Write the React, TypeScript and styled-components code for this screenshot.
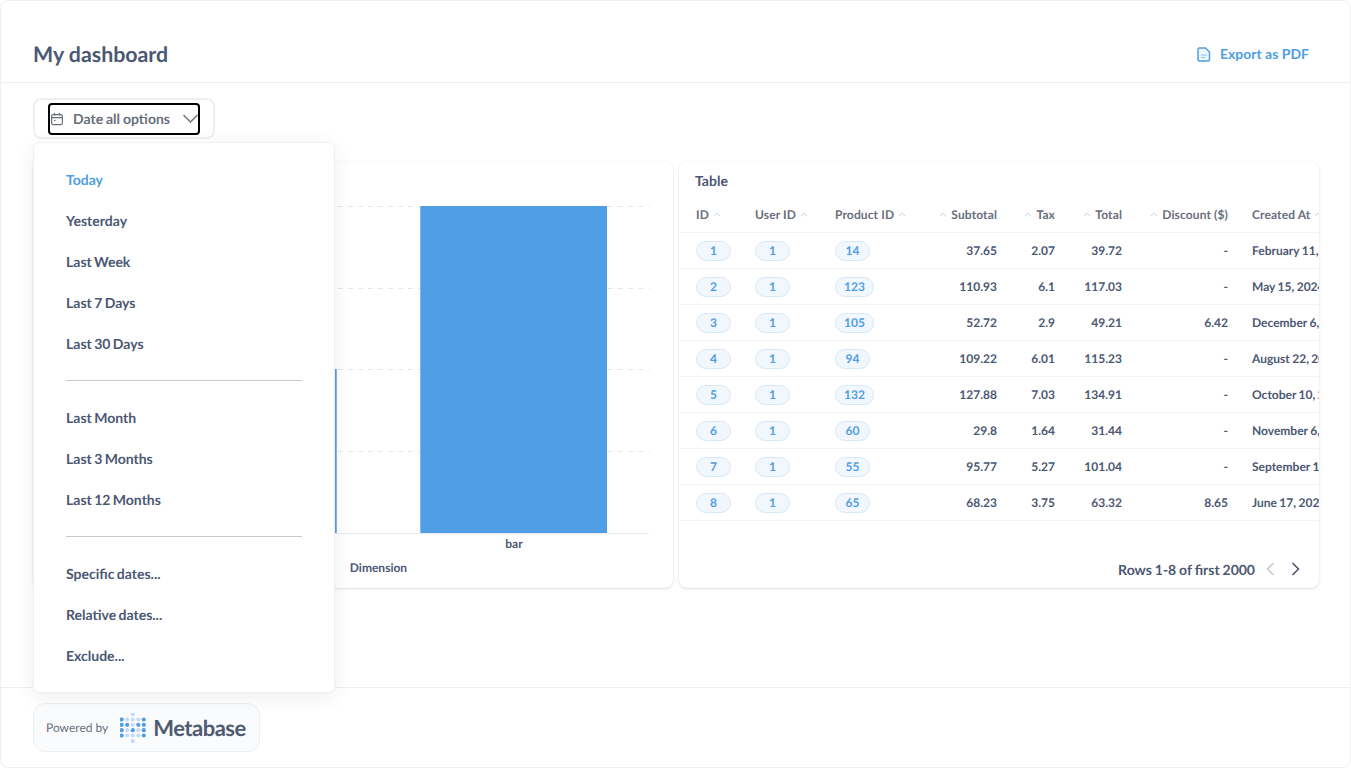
import React from 'react';
import styled, { createGlobalStyle } from 'styled-components';

const Global = createGlobalStyle`
  html, body { margin: 0; padding: 0; background: #fff; }
  body { font-family: Lato, "Open Sans", sans-serif; color: #4c5773; text-rendering: geometricPrecision; }
  * { box-sizing: border-box; }
`;
const Frame = styled.div`
  position: relative; width: 1351px; height: 768px; overflow: hidden; background: #fff;
  border: 1px solid #eeeff0; border-radius: 8px; display: flex; flex-direction: column;
`;
const Header = styled.header`
  height: 82px; padding: 39px 41px 0 32px; border-bottom: 1px solid #eeeff0;
  display: flex; align-items: flex-start; justify-content: space-between; flex: none;
`;
const Title = styled.h1`margin: 0; font-size: 21.33px; line-height: 29px; font-weight: 700; color: #4c5773;`;
const ExportButton = styled.button`
  border: 0; background: none; padding: 0; margin-top: 4px; font: 700 14px/20px Lato, sans-serif; color: #509ee3; display: flex; align-items: center; gap: 9px;
`;
const ParamBar = styled.div`height: 79px; padding: 15px 0 0 32px; flex: none;`;
const Param = styled.div`
  width: 182px; height: 41px; border: 2px solid #eeeff0; border-radius: 8px; padding: 3px 0 0 13px;
`;
const ParamInner = styled.div`
  width: 152px; height: 32px; border: 2px solid #000; border-radius: 4px; padding: 0 0 1px 0; display: flex; align-items: center;
  font-size: 14px; font-weight: 700; color: #696e7b; word-spacing: -0.5px;
`;
const ParamLabel = styled.span`margin-left: 9px; flex: 1;`;
const Cards = styled.div`display: flex; gap: 6px; padding: 0 0 0 32px; flex: none; height: 426px;`;
const Card = styled.section<{ $w: number }>`
  width: ${p => p.$w}px; height: 426px; border-radius: 8px; background: #fff; overflow: hidden; flex: none; position: relative;
  box-shadow: 0 1px 3px rgba(0,0,0,.13), 0 0 1px rgba(0,0,0,.06);
`;
const CardTitle = styled.div`font-size: 14px; font-weight: 700; line-height: 18px; padding: 10px 0 0 16px; height: 35px;`;
const Row = styled.div<{ $head?: boolean }>`
  display: grid; grid-template-columns: 59px 80px 88px 74px 58px 67px 106px 200px; padding-left: 17px; align-items: center;
  height: 36px; border-bottom: 1px solid #f2f3f4; font-size: 12px; font-weight: 700;
  color: ${p => (p.$head ? '#696e7b' : '#4c5773')}; white-space: nowrap;
  ${p => (p.$head ? 'letter-spacing: 0.12px;' : 'word-spacing: -0.5px;')}
`;
const HeadCell = styled.div<{ $end?: boolean; $gap?: boolean }>`
  display: flex; align-items: center; gap: 4px; justify-content: ${p => (p.$end ? 'flex-end' : 'flex-start')};
  padding-left: ${p => (p.$gap ? 24 : 0)}px;
`;
const Cell = styled.div<{ $end?: boolean; $gap?: boolean }>`
  text-align: ${p => (p.$end ? 'right' : 'left')}; padding-left: ${p => (p.$gap ? 24 : 0)}px;
`;
const Badge = styled.span`
  display: inline-block; min-width: 35px; height: 20px; line-height: 18px; padding: 0 8px; border-radius: 10px; text-align: center;
  background: #f1f7fd; border: 1px solid #d9e8f8; color: #509ee3; vertical-align: middle;
`;
const Pager = styled.div`
  position: absolute; right: 17px; bottom: 9px; display: flex; align-items: center; font-size: 14px; font-weight: 700; color: #4c5773; height: 20px; word-spacing: -0.5px;
`;
const PagerIcons = styled.div`display: flex; margin-left: 9px; gap: 10px; align-items: center;`;
const Spacer = styled.div`flex: 1;`;
const Footer = styled.footer`
  height: 80px; flex: none; border-top: 1px solid #eeeff0; padding: 15px 0 0 32px;
`;
const Powered = styled.div`
  width: 227px; height: 49px; border: 1px solid #eeeff0; border-radius: 12px; background: #f9fbfc; padding-left: 12px;
  display: flex; align-items: center; font-size: 12px; color: #696e7b;
`;
const Wordmark = styled.span`font-size: 22px; font-weight: 700; color: #505a71; margin-left: 7px; letter-spacing: -0.5px;`;
const LogoBox = styled.span`margin-left: 12px; display: flex;`;
const Popover = styled.div`
  position: absolute; left: 32px; top: 141px; width: 302px; height: 551px; background: #fff; border: 1px solid #eeeff0; border-radius: 6px;
  box-shadow: 0 4px 20px rgba(0,0,0,.07); padding: 16px 32px 0; z-index: 5; word-spacing: -1px;
`;
const MenuItem = styled.div<{ $active?: boolean }>`
  height: 41px; line-height: 41px; font-size: 14px; font-weight: 700; color: ${p => (p.$active ? '#509ee3' : '#4c5773')};
`;
const Divider = styled.div`height: 1px; background: #c7cbd3; margin: 16px 0;`;

const Chevron = () => (
  <svg width="8" height="5" viewBox="0 0 8 5" fill="none" stroke="#d0d3d9" strokeWidth="1"><path d="M.8 4.2 4 1l3.2 3.2" /></svg>
);
const xs = [1.7, 7.2, 12.8, 18.3, 23.8];
const ys = [1.2, 6.5, 11.8, 17.2, 22.5, 28];
const pattern = ['..L..', 'DLLLD', 'DDLDD', 'DLDLD', 'DLLLD', '..L..'];
const dots: [number, number, string][] = [];
pattern.forEach((r, y) => r.split('').forEach((c, x) => {
  if (c === '.') return;
  dots.push([xs[x], ys[y], c === 'D' ? '#509ee3' : '#c5dcf4']);
}));

const data = [
  ['1','1','14','37.65','2.07','39.72','-','February 11, 2025, 9:40 PM'],
  ['2','1','123','110.93','6.1','117.03','-','May 15, 2024, 8:04 AM'],
  ['3','1','105','52.72','2.9','49.21','6.42','December 6, 2024, 10:21 PM'],
  ['4','1','94','109.22','6.01','115.23','-','August 22, 2024, 4:30 AM'],
  ['5','1','132','127.88','7.03','134.91','-','October 10, 2024, 11:34 PM'],
  ['6','1','60','29.8','1.64','31.44','-','November 6, 2024, 6:04 PM'],
  ['7','1','55','95.77','5.27','101.04','-','September 11, 2025, 5:48 PM'],
  ['8','1','65','68.23','3.75','63.32','8.65','June 17, 2025, 3:11 AM'],
];
const grid = [206, 288, 369, 451];

export default function App() {
  return (
    <Frame>
      <Global />
      <Header>
        <Title>My dashboard</Title>
        <ExportButton>
          <svg width="14" height="15" viewBox="0 0 14 15" fill="none">
            <path d="M2.5 1h6L12.5 5v7.500a1.500 1.500 0 0 1-1.500 1.500H2.500A1.500 1.500 0 0 1 1 12.500v-10A1.500 1.500 0 0 1 2.500 1Z" fill="#eef5fc" stroke="#509ee3" strokeWidth="1.5" />
            <path d="M4 8h6M4 10.500h4" stroke="#8fc0ec" strokeWidth="1.2" />
          </svg>
          Export as PDF
        </ExportButton>
      </Header>
      <ParamBar>
        <Param>
          <ParamInner>
            <svg width="14" height="14" viewBox="0 0 14 14" fill="none" stroke="#696e7b" strokeWidth="1.2">
              <rect x="1.6" y="2.6" width="10.8" height="10" rx="1.5" />
              <path d="M1.6 5.600h10.800M4.500 1v2.500M9.500 1v2.500" />
              <path d="M4 8.500h1.500" />
            </svg>
            <ParamLabel>Date all options</ParamLabel>
            <svg width="15" height="9" viewBox="0 0 15 9" fill="none" stroke="#696e7b" strokeWidth="1.3"><path d="M.5 1 7.500 8l7-7" /></svg>
          </ParamInner>
        </Param>
      </ParamBar>
      <Cards>
        <Card $w={640}>
          <svg width="640" height="426" viewBox="33 162 640 426" fontFamily="Lato, sans-serif" fontWeight="700" fontSize="12" fill="#4c5773">
            {grid.map(y => <line key={y} x1="298" x2="649" y1={y + 0.5} y2={y + 0.5} stroke="#e5e7ea" strokeDasharray="5 5" />)}
            <rect x="100" y="369" width="236.7" height="164" fill="#509ee3" />
            <rect x="420.3" y="206" width="186.7" height="327" fill="#509ee3" />
            <line x1="33" x2="649" y1="533.5" y2="533.5" stroke="#e9eaec" />
            <text x="514" y="548" textAnchor="middle">bar</text>
            <text x="378.5" y="572" textAnchor="middle">Dimension</text>
          </svg>
        </Card>
        <Card $w={640}>
          <CardTitle>Table</CardTitle>
          <Row $head>
            <HeadCell>ID <Chevron /></HeadCell>
            <HeadCell>User ID <Chevron /></HeadCell>
            <HeadCell>Product ID <Chevron /></HeadCell>
            <HeadCell $end><Chevron /> Subtotal</HeadCell>
            <HeadCell $end><Chevron /> Tax</HeadCell>
            <HeadCell $end><Chevron /> Total</HeadCell>
            <HeadCell $end><Chevron /> Discount ($)</HeadCell>
            <HeadCell $gap>Created At <Chevron /></HeadCell>
          </Row>
          {data.map(r => (
            <Row key={r[0]}>
              <Cell><Badge>{r[0]}</Badge></Cell>
              <Cell><Badge>{r[1]}</Badge></Cell>
              <Cell><Badge>{r[2]}</Badge></Cell>
              <Cell $end>{r[3]}</Cell>
              <Cell $end>{r[4]}</Cell>
              <Cell $end>{r[5]}</Cell>
              <Cell $end>{r[6]}</Cell>
              <Cell $gap>{r[7]}</Cell>
            </Row>
          ))}
          <Pager>
            Rows 1-8 of first 2000
            <PagerIcons>
              <svg width="14" height="14" viewBox="0 0 14 14" fill="none" stroke="#c7cbd3" strokeWidth="1.6"><path d="M9.500 1 3.500 7l6 6" /></svg>
              <svg width="14" height="14" viewBox="0 0 14 14" fill="none" stroke="#4c5773" strokeWidth="1.6"><path d="M4.500 1l6 6-6 6" /></svg>
            </PagerIcons>
          </Pager>
        </Card>
      </Cards>
      <Spacer />
      <Footer>
        <Powered>
          Powered by
          <LogoBox>
            <svg width="26" height="30" viewBox="0 0 26 30">
              {dots.map(([x, y, c], i) => <circle key={i} cx={x} cy={y} r="2.1" fill={c} />)}
            </svg>
          </LogoBox>
          <Wordmark>Metabase</Wordmark>
        </Powered>
      </Footer>
      <Popover>
        <MenuItem $active>Today</MenuItem>
        <MenuItem>Yesterday</MenuItem>
        <MenuItem>Last Week</MenuItem>
        <MenuItem>Last 7 Days</MenuItem>
        <MenuItem>Last 30 Days</MenuItem>
        <Divider />
        <MenuItem>Last Month</MenuItem>
        <MenuItem>Last 3 Months</MenuItem>
        <MenuItem>Last 12 Months</MenuItem>
        <Divider />
        <MenuItem>Specific dates...</MenuItem>
        <MenuItem>Relative dates...</MenuItem>
        <MenuItem>Exclude...</MenuItem>
      </Popover>
    </Frame>
  );
}
